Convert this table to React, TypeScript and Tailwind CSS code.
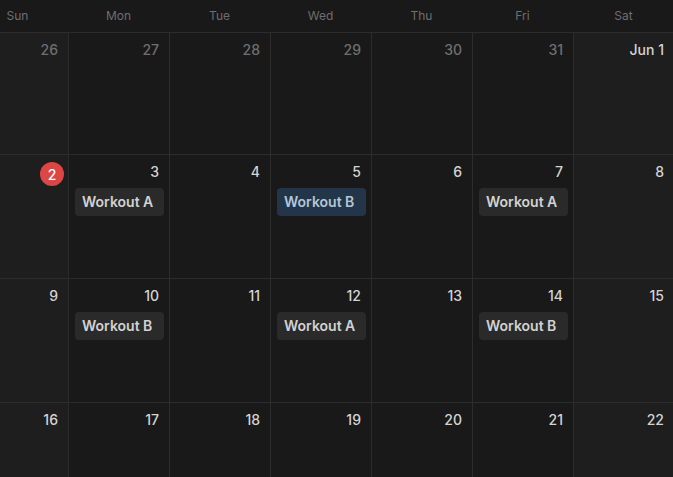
import React from "react";

interface EventItem {
  title: string;
  color: "gray" | "blue";
}

interface DayCell {
  label: string;
  muted?: boolean;
  today?: boolean;
  events?: EventItem[];
}

const dayNames = ["Sun", "Mon", "Tue", "Wed", "Thu", "Fri", "Sat"];

const weeks: DayCell[][] = [
  [
    { label: "26", muted: true },
    { label: "27", muted: true },
    { label: "28", muted: true },
    { label: "29", muted: true },
    { label: "30", muted: true },
    { label: "31", muted: true },
    { label: "Jun 1" },
  ],
  [
    { label: "2", today: true },
    { label: "3", events: [{ title: "Workout A", color: "gray" }] },
    { label: "4" },
    { label: "5", events: [{ title: "Workout B", color: "blue" }] },
    { label: "6" },
    { label: "7", events: [{ title: "Workout A", color: "gray" }] },
    { label: "8" },
  ],
  [
    { label: "9" },
    { label: "10", events: [{ title: "Workout B", color: "gray" }] },
    { label: "11" },
    { label: "12", events: [{ title: "Workout A", color: "gray" }] },
    { label: "13" },
    { label: "14", events: [{ title: "Workout B", color: "gray" }] },
    { label: "15" },
  ],
  [
    { label: "16" },
    { label: "17" },
    { label: "18" },
    { label: "19" },
    { label: "20" },
    { label: "21" },
    { label: "22" },
  ],
];

const rowHeights = ["h-[122px]", "h-[124px]", "h-[124px]", "h-[124px]"];

export default function App() {
  return (
    <div className="w-[673px] h-[477px] overflow-hidden bg-[#191919]" style={{ fontFamily: "Inter, 'Noto Sans', sans-serif" }}>
      {/* the week grid is wider than the window and scrolled a little to the right */}
      <div className="w-[707px] ml-[-33px]">
        <div className="grid grid-cols-7 h-[32px]">
          {dayNames.map((d) => (
            <div key={d} className="flex items-center justify-center text-[12px] text-[#6e6e6e]">
              {d}
            </div>
          ))}
        </div>

        {weeks.map((week, wi) => (
          <div key={wi} className={`grid grid-cols-7 border-t border-[#2c2c2c] ${rowHeights[wi]}`}>
            {week.map((day, di) => {
              const weekend = di === 0 || di === 6;
              return (
                <div key={di} className={`flex flex-col ${di > 0 ? "border-l border-[#2c2c2c]" : ""} ${weekend ? "bg-[#1e1e1e]" : "bg-[#191919]"}`}>
                  <div className="flex justify-end pr-[10px] pt-[6px] h-[33px]">
                    {day.today ? (
                      <span className="w-[24px] h-[24px] mt-[1px] rounded-full bg-[#dc4644] text-white text-[14px] font-medium flex items-center justify-center -mr-[6px]">{day.label}</span>
                    ) : (
                      <span className={`text-[14px] leading-[20px] pt-[1px] font-medium ${day.muted ? "text-[#6f6f6f]" : "text-[#d4d4d4]"}`}>{day.label}</span>
                    )}
                  </div>
                  {day.events?.map((ev, ei) => (
                    <div
                      key={ei}
                      className={`ml-[6px] mr-[5px] h-[28px] rounded-[4px] flex items-center pl-[7px] pb-[2px] text-[14px] font-semibold ${
                        ev.color === "blue" ? "bg-[#233548] text-[#b4c6d8]" : "bg-[#2a2a2a] text-[#d2d2d2]"
                      }`}
                    >
                      {ev.title}
                    </div>
                  ))}
                </div>
              );
            })}
          </div>
        ))}
      </div>
    </div>
  );
}
